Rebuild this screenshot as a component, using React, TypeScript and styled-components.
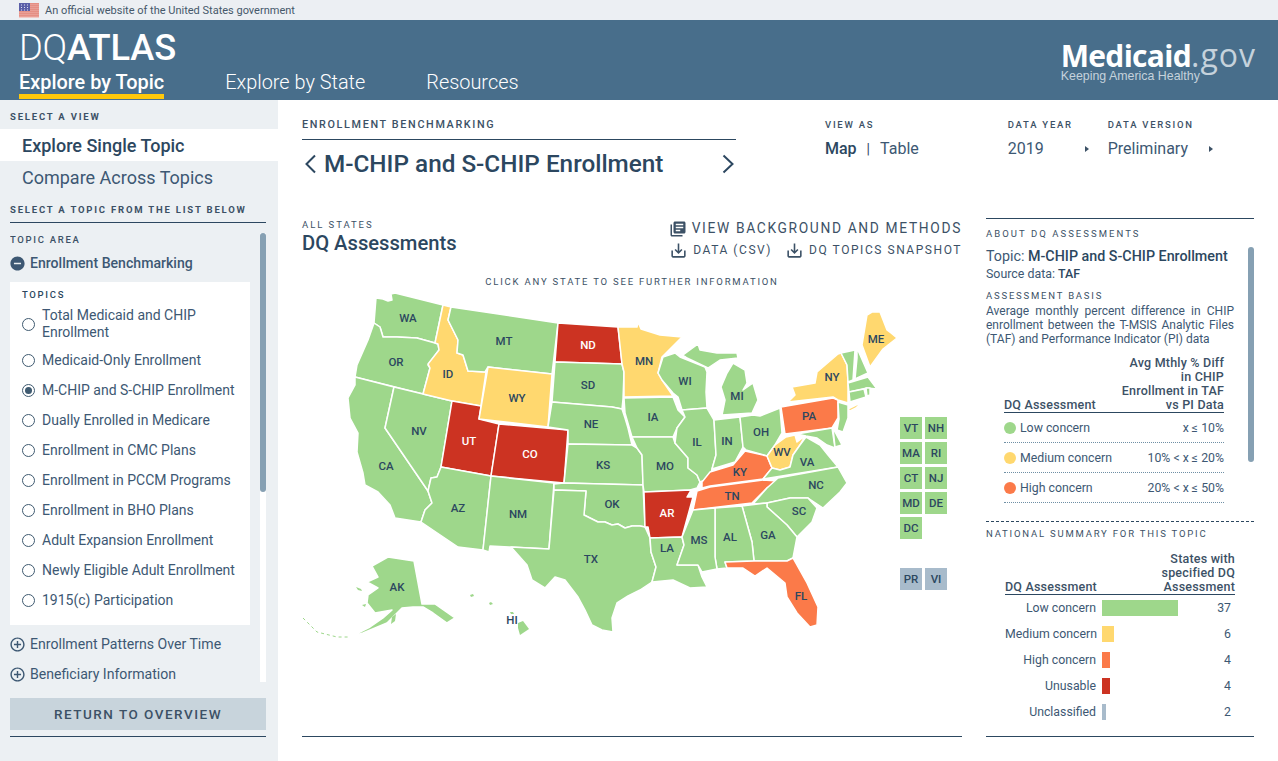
import React from "react";
import styled, { createGlobalStyle } from "styled-components";
import { MdLibraryBooks, MdSaveAlt, MdRemoveCircle, MdAddCircleOutline } from "react-icons/md";

const INK = "#2c4760";
const GREEN = "#9ed78b";
const YELLOW = "#ffd86f";
const ORANGE = "#fb7a49";
const RED = "#cc3322";
const SLATE = "#a8bbcb";

const GlobalStyle = createGlobalStyle`
  html, body {
    margin: 0;
    padding: 0;
    background: #fff;
    color: ${INK};
    font-family: Roboto, "Liberation Sans", sans-serif;
  }
  * { box-sizing: border-box; }
`;

const Page = styled.div`
  width: 1278px;
  height: 761px;
  overflow: hidden;
  display: flex;
  flex-direction: column;
`;

const Banner = styled.div`
  height: 20px;
  background: #eceff3;
  display: flex;
  align-items: center;
  gap: 6px;
  padding-left: 19px;
  font-size: 11px;
  color: #45586a;
`;

const Header = styled.header`
  height: 80px;
  background: #486e8b;
  padding: 0 22px 0 19px;
  display: flex;
  justify-content: space-between;
  color: #fff;
`;

const Brand = styled.div`
  font-size: 36.3px;
  line-height: 44px;
  font-weight: 500;
  padding-top: 6px;
  height: 50px;
  letter-spacing: -0.2px;
  span { font-weight: 300; }
`;

const Nav = styled.nav`
  display: flex;
  gap: 61px;
`;

const NavItem = styled.div<{ $active?: boolean }>`
  font-size: 19.9px;
  line-height: 24px;
  height: 29px;
  padding-top: 1px;
  font-weight: ${(p) => (p.$active ? 500 : 300)};
  border-bottom: ${(p) => (p.$active ? "5px solid #ffc80a" : "none")};
`;

const Logo = styled.div`
  padding-top: 20px;
  line-height: 1;
`;

const LogoMain = styled.div`
  font-family: "Open Sans", "Liberation Sans", sans-serif;
  font-size: 30px;
  height: 30px;
  line-height: 30px;
  font-weight: 700;
  letter-spacing: -0.7px;
  span { font-size: 32px; font-weight: 400; color: #c5d2dc; letter-spacing: 1px; }
`;

const LogoTag = styled.div`
  font-family: "Liberation Sans", sans-serif;
  font-size: 12.4px;
  color: #c5d2dc;
`;

const Body = styled.div`
  flex: 1;
  display: flex;
  min-height: 0;
`;

const Sidebar = styled.aside`
  width: 278px;
  background: #ecf0f3;
  display: flex;
  flex-direction: column;
`;

const SideLabel = styled.div`
  font-size: 9.5px;
  font-weight: 700;
  letter-spacing: 1.8px;
  line-height: 12px;
  color: #3c5166;
`;

const ViewLabel = styled(SideLabel)`
  padding: 11px 10px 6px;
`;

const ViewItem = styled.div<{ $active?: boolean }>`
  height: 32px;
  line-height: 33px;
  padding-left: 22px;
  font-size: 18px;
  font-weight: ${(p) => (p.$active ? 500 : 400)};
  background: ${(p) => (p.$active ? "#fff" : "transparent")};
  color: ${(p) => (p.$active ? INK : "#3d5873")};
`;

const ListLabel = styled(SideLabel)`
  margin: 11px 12px 0 10px;
  padding-bottom: 6px;
  border-bottom: 1px solid ${INK};
`;

const ScrollPanel = styled.div`
  display: flex;
  height: 449px;
  margin: 10px 12px 0 10px;
  gap: 10px;
  overflow: hidden;
`;

const PanelContent = styled.div`
  width: 240px;
  padding-top: 1px;
`;

const Track = styled.div`
  width: 6px;
  height: 100%;
  background: #fff;
`;

const Thumb = styled.div<{ $height: number }>`
  width: 6px;
  flex: none;
  height: ${(p) => p.$height}px;
  border-radius: 3px;
  background: #86a0b3;
`;

const AreaLabel = styled.div`
  font-size: 9.5px;
  font-weight: 500;
  letter-spacing: 1.7px;
  line-height: 12px;
  margin-bottom: 2px;
  color: #3c5166;
`;

const AreaRow = styled.div<{ $open?: boolean }>`
  display: flex;
  align-items: center;
  gap: 6px;
  height: 30px;
  font-size: 14.1px;
  font-weight: ${(p) => (p.$open ? 500 : 400)};
  color: #3d5873;
  svg { flex: none; margin: 0 -1.5px; }
`;

const TopicBox = styled.div`
  background: #fff;
  padding: 7px 12px 10px;
  margin: 4px 0;
  height: 343px;
`;

const TopicsLabel = styled.div`
  font-size: 9.5px;
  font-weight: 500;
  letter-spacing: 1.7px;
  line-height: 12px;
  margin-bottom: 6px;
`;

const TopicRow = styled.div<{ $tall?: boolean }>`
  display: flex;
  align-items: center;
  gap: 7px;
  min-height: 30px;
  font-size: 14px;
  line-height: 17px;
  color: #3d5873;
  margin-bottom: ${(p) => (p.$tall ? "4px" : "0")};
`;

const Radio = styled.span<{ $checked?: boolean }>`
  width: 13px;
  height: 13px;
  flex: none;
  border-radius: 50%;
  border: 1.5px solid #3f5a70;
  display: flex;
  align-items: center;
  justify-content: center;
  &::after {
    content: "";
    display: ${(p) => (p.$checked ? "block" : "none")};
    width: 7px;
    height: 7px;
    border-radius: 50%;
    background: #3f5a70;
  }
`;

const ReturnButton = styled.div`
  margin: 16px 12px 0 10px;
  height: 32px;
  line-height: 32px;
  background: #c8d4dc;
  text-align: center;
  font-size: 13.5px;
  font-weight: 500;
  letter-spacing: 1.5px;
  color: #3c5166;
`;

const SideRule = styled.div`
  margin: 6px 12px 0 10px;
  border-top: 1px solid ${INK};
`;

const Content = styled.main`
  flex: 1;
  padding: 0 24px;
  display: grid;
  grid-template-columns: 660px 268px;
  grid-template-rows: 118px 1fr;
  column-gap: 24px;
`;

const TopBar = styled.div`
  grid-column: 1 / span 2;
  display: flex;
  padding-top: 18px;
`;

const TitleBlock = styled.div`
  width: 434px;
`;

const Eyebrow = styled.div`
  font-size: 10.8px;
  font-weight: 500;
  letter-spacing: 1.65px;
  line-height: 12px;
  padding: 1px 0 8px;
  border-bottom: 1px solid ${INK};
  color: #3c5166;
`;

const Title = styled.h1`
  margin: 0;
  display: flex;
  align-items: center;
  gap: 8px;
  height: 47px;
  font-size: 24.3px;
  font-weight: 500;
  color: ${INK};
  > span { flex: 1; }
`;

const Control = styled.div<{ $left: number }>`
  margin-left: ${(p) => p.$left}px;
  padding-top: 1px;
`;

const ControlLabel = styled.div`
  font-size: 9.5px;
  font-weight: 500;
  letter-spacing: 1.75px;
  line-height: 12px;
  color: #3c5166;
`;

const ControlValue = styled.div`
  margin-top: 8px;
  font-size: 16px;
  line-height: 20px;
  color: #3d5873;
  display: flex;
  align-items: center;
  b { font-weight: 500; color: ${INK}; }
  i { font-style: normal; font-size: 14px; padding: 0 10px; color: ${INK}; }
`;

const Caret = styled.span<{ $gap: number }>`
  margin-left: ${(p) => p.$gap}px;
  border-left: 4px solid #3c5166;
  border-top: 3.5px solid transparent;
  border-bottom: 3.5px solid transparent;
`;

const MapColumn = styled.section`
  display: flex;
  flex-direction: column;
`;

const MapHead = styled.div`
  display: flex;
  justify-content: space-between;
  height: 58px;
  padding-top: 1px;
`;

const StateScope = styled.div`
  font-size: 9.5px;
  font-weight: 400;
  letter-spacing: 1.95px;
  line-height: 12px;
  color: #3c5166;
`;

const MapTitle = styled.h2`
  margin: 0;
  font-size: 20.2px;
  line-height: 24px;
  font-weight: 500;
  color: ${INK};
`;

const Links = styled.div`
  display: flex;
  flex-direction: column;
  align-items: flex-end;
  gap: 5px;
  padding-top: 1px;
`;

const LinkRow = styled.div`
  display: flex;
  gap: 15px;
`;

const LinkItem = styled.span<{ $big?: boolean }>`
  display: inline-flex;
  align-items: center;
  gap: ${(p) => (p.$big ? "6px" : "7px")};
  font-size: ${(p) => (p.$big ? "13.8px" : "12px")};
  line-height: 17px;
  letter-spacing: ${(p) => (p.$big ? "1.65px" : "1.55px")};
  color: #3c5166;
  svg { flex: none; margin: ${(p) => (p.$big ? "-1px" : "-2px")}; }
`;

const MapHint = styled.div`
  text-align: center;
  font-size: 9.5px;
  letter-spacing: 1.8px;
  line-height: 12px;
  color: #3c5166;
`;

const MapCanvas = styled.svg`
  display: block;
  margin-top: 2px;
`;

const StateCode = styled.text<{ $light?: boolean }>`
  font-family: Roboto, sans-serif;
  font-size: 11.5px;
  font-weight: 500;
  fill: ${(p) => (p.$light ? "#fff" : INK)};
  text-anchor: middle;
  dominant-baseline: central;
`;

const MapFoot = styled.div`
  margin-top: 86px;
  border-top: 1px solid ${INK};
`;

const InfoColumn = styled.section`
  display: flex;
  flex-direction: column;
`;

const InfoTopRule = styled.div`
  border-top: 1px solid ${INK};
`;

const InfoLabel = styled.div<{ $tight?: boolean }>`
  font-size: 9.5px;
  font-weight: 400;
  letter-spacing: ${(p) => (p.$tight ? "1.8px" : "2.05px")};
  line-height: 12px;
  color: #3c5166;
`;

const AboutLabel = styled(InfoLabel)`
  margin-top: 9px;
`;

const AboutScroll = styled.div`
  display: flex;
  justify-content: space-between;
  margin-top: 7px;
  height: 274px;
`;

const AboutBody = styled.div`
  width: 248px;
`;

const TopicLine = styled.div`
  font-size: 14.3px;
  line-height: 19px;
  color: #3d5873;
  b { font-weight: 500; color: ${INK}; }
`;

const SourceLine = styled.div`
  font-size: 12.4px;
  line-height: 16px;
  color: #3d5873;
  b { font-weight: 500; color: ${INK}; }
`;

const BasisLabel = styled(InfoLabel)`
  margin-top: 8px;
`;

const BasisText = styled.p`
  margin: 2px 0 0;
  font-size: 12px;
  line-height: 14px;
  text-align: justify;
  color: #3d5873;
`;

const Legend = styled.div`
  margin: 10px 10px 0 18px;
`;

const LegendHead = styled.div`
  display: flex;
  justify-content: space-between;
  align-items: flex-end;
  font-size: 12.5px;
  font-weight: 500;
  line-height: 14px;
  letter-spacing: 0.2px;
  border-bottom: 1px solid ${INK};
  color: #3c5166;
`;

const HeadRight = styled.div`
  text-align: right;
`;

const LegendRow = styled.div`
  display: flex;
  align-items: center;
  height: 30px;
  font-size: 12.3px;
  color: #3d5873;
  border-bottom: 1px dotted #6f8fa5;
  span:last-child { margin-left: auto; }
`;

const Dot = styled.span<{ $color: string }>`
  width: 12px;
  height: 12px;
  border-radius: 50%;
  margin-right: 4px;
  background: ${(p) => p.$color};
`;

const DashedRule = styled.div`
  border-top: 1px dashed ${INK};
`;

const SummaryLabel = styled(InfoLabel)`
  margin-top: 6px;
`;

const SummaryTable = styled.div`
  margin: 12px 19px 0 19px;
`;

const SummaryRow = styled.div`
  display: grid;
  grid-template-columns: 91px 1fr 20px;
  column-gap: 6px;
  align-items: center;
  height: 26px;
  font-size: 12.3px;
  color: #3d5873;
  > span:first-child { text-align: right; white-space: nowrap; }
  > span:last-child { text-align: right; margin-right: 4px; }
`;

const Bar = styled.div<{ $color: string }>`
  height: 16px;
  background: ${(p) => p.$color};
`;

const SummaryFoot = styled.div`
  margin-top: 11px;
  border-top: 1px solid ${INK};
`;

type StateShape = { code: string; fill: string; pts: string; lx?: number; ly?: number; light?: boolean; bare?: boolean };

const STATES: StateShape[] = [
  { code: "WA", fill: GREEN, lx: 408, ly: 318, pts: "376,298 383,299 388,301 392,300 391,294 395,293 443,305 435,343 417,338 397,337 383,337 380,327 374,323" },
  { code: "OR", fill: GREEN, lx: 396, ly: 362, pts: "374,323 380,327 383,337 397,337 417,338 435,343 438,344 439,350 428,365 430,368 423,394 355,377 357,365 368,340" },
  { code: "CA", fill: GREEN, lx: 386, ly: 466, pts: "355,377 394,387 385,428 428,491 432,503 425,510 421,522 395,518 390,505 378,492 365,485 363,473 357,452 358,433 350,418 348,398 355,385" },
  { code: "NV", fill: GREEN, lx: 419, ly: 431, pts: "394,387 423,394 452,401 441,467 437,477 431,478 428,491 385,428" },
  { code: "ID", fill: YELLOW, lx: 448, ly: 374, pts: "443,305 451,307 448,320 458,340 457,353 463,355 468,371 486,372 481,406 452,401 423,394 430,368 428,364 439,350 438,344 435,343" },
  { code: "MT", fill: GREEN, lx: 504, ly: 341, pts: "451,307 558,323 552,374 488,367 485,372 468,371 463,355 457,353 458,340 448,320" },
  { code: "UT", fill: RED, lx: 469, ly: 441, light: true, pts: "452,401 481,406 479,419 499,424 491,476 441,467" },
  { code: "WY", fill: YELLOW, lx: 517, ly: 398, pts: "488,367 552,374 548,427 479,419" },
  { code: "CO", fill: RED, lx: 530, ly: 454, light: true, pts: "499,424 568,430 564,483 491,476" },
  { code: "AZ", fill: GREEN, lx: 458, ly: 508, pts: "431,478 437,477 441,467 491,476 483,550 458,547 421,522 425,510 432,503 428,491" },
  { code: "NM", fill: GREEN, lx: 518, ly: 514, pts: "491,476 554,483 549,549 509,547 490,546 489,552 483,550" },
  { code: "ND", fill: RED, lx: 588, ly: 345, light: true, pts: "558,323 618,327 622,364 555,362" },
  { code: "SD", fill: GREEN, lx: 588, ly: 385, pts: "555,362 622,364 624,372 623,399 622,409 612,407 552,402" },
  { code: "NE", fill: GREEN, lx: 591, ly: 424, pts: "552,402 612,407 622,409 625,418 628,428 632,445 568,444 568,430 548,427" },
  { code: "KS", fill: GREEN, lx: 603, ly: 465, pts: "568,444 632,445 637,448 642,455 643,485 564,483" },
  { code: "OK", fill: GREEN, lx: 612, ly: 504, pts: "554,484 564,483 643,485 645,527 640,526 632,526 625,528 618,524 612,525 605,522 598,522 590,518 584,515 586,491 554,490" },
  { code: "TX", fill: GREEN, lx: 591, ly: 559, pts: "554,490 586,491 584,515 590,518 598,522 605,522 612,525 618,524 625,528 632,526 640,526 645,527 650,538 651,552 656,567 652,582 640,590 628,596 617,603 612,618 613,632 602,630 592,625 585,610 578,597 565,580 555,577 545,588 532,580 527,565 511,547 549,549" },
  { code: "MN", fill: YELLOW, lx: 644, ly: 361, pts: "618,327 637,327 638,322 641,329 660,335 682,337 662,357 658,373 662,380 673,396 624,397 624,372 622,364" },
  { code: "IA", fill: GREEN, lx: 653, ly: 417, pts: "624,398 673,397 678,410 685,417 677,428 673,437 632,437 625,413" },
  { code: "MO", fill: GREEN, lx: 665, ly: 466, pts: "632,437 673,437 675,443 688,458 688,468 697,475 700,482 697,488 690,490 644,492 643,485 642,455 637,448" },
  { code: "AR", fill: RED, lx: 667, ly: 513, light: true, pts: "644,492 691,490 687,497 693,497 682,537 650,538 648,527 645,527" },
  { code: "LA", fill: GREEN, lx: 667, ly: 548, pts: "650,538 682,537 684,545 677,565 698,565 702,577 707,587 690,588 673,580 652,582 656,567 651,552" },
  { code: "WI", fill: GREEN, lx: 685, ly: 381, pts: "663,357 675,353 680,357 705,367 707,372 706,392 707,408 682,410 678,397 673,393 662,380 658,373" },
  { code: "MIU", fill: GREEN, pts: "683,355 698,344 700,350 717,353 737,353 738,358 720,360 708,368 687,358" },
  { code: "MI", fill: GREEN, lx: 737, ly: 396, pts: "733,363 745,370 747,383 743,390 753,383 758,400 752,413 722,415 725,400 721,387 727,373" },
  { code: "IL", fill: GREEN, lx: 697, ly: 442, pts: "682,410 707,408 714,420 716,455 712,469 710,478 700,482 697,475 688,468 688,458 675,443 677,428 685,417" },
  { code: "IN", fill: GREEN, lx: 727, ly: 441, pts: "714,420 740,417 743,447 735,462 712,469 716,455" },
  { code: "OH", fill: GREEN, lx: 761, ly: 432, pts: "740,417 753,415 760,416 780,408 782,433 775,445 767,456 746,450 743,447" },
  { code: "KY", fill: ORANGE, lx: 740, ly: 472, pts: "702,482 710,472 733,465 745,451 767,456 772,468 763,479 710,486 702,488" },
  { code: "TN", fill: ORANGE, lx: 732, ly: 496, pts: "697,491 710,487 763,480 778,481 767,488 752,503 693,510" },
  { code: "WV", fill: YELLOW, lx: 782, ly: 452, pts: "786,437 795,435 797,442 805,436 800,445 793,455 790,467 780,470 772,468 767,456 775,445" },
  { code: "PA", fill: ORANGE, lx: 809, ly: 416, pts: "781,407 833,398 838,400 838,418 832,428 785,434" },
  { code: "NY", fill: YELLOW, lx: 832, ly: 377, pts: "788,402 795,395 792,387 815,383 817,372 838,354 841,353 847,365 848,382 848,403 838,400 833,397" },
  { code: "LI", fill: YELLOW, pts: "848,409 862,402 856,408 850,411" },
  { code: "NJ", fill: GREEN, pts: "838,402 848,405 848,418 843,432 837,430 839,419" },
  { code: "VA", fill: GREEN, lx: 807, ly: 462, pts: "763,479 772,468 780,470 790,467 793,455 800,445 806,437 820,445 828,455 838,467" },
  { code: "MD", fill: GREEN, pts: "797,434 832,428 835,448 827,445 817,438 806,436" },
  { code: "DE", fill: GREEN, pts: "833,428 842,445 835,447" },
  { code: "NC", fill: GREEN, lx: 816, ly: 485, pts: "778,478 838,467 847,483 840,492 823,508 808,498 790,498 767,503 753,504 767,488" },
  { code: "SC", fill: GREEN, lx: 799, ly: 511, pts: "767,503 790,498 808,498 817,508 812,522 797,537 787,525 767,507" },
  { code: "GA", fill: GREEN, lx: 768, ly: 535, pts: "742,506 767,503 767,507 787,525 797,537 793,558 787,561 754,561 752,542" },
  { code: "AL", fill: GREEN, lx: 730, ly: 537, pts: "715,508 742,506 752,542 754,561 725,562 727,568 717,569 715,557" },
  { code: "MS", fill: GREEN, lx: 699, ly: 540, pts: "682,537 693,510 715,508 715,557 717,569 702,572 698,565 677,565 684,545" },
  { code: "FL", fill: ORANGE, lx: 801, ly: 596, pts: "725,562 754,561 787,561 793,558 807,583 818,607 817,625 810,627 797,613 787,597 785,583 767,568 755,576 743,568 727,568" },
  { code: "ME", fill: YELLOW, lx: 876, ly: 339, pts: "867,315 872,312 880,312 887,330 891,333 897,338 883,349 870,367 862,345" },
  { code: "VT", fill: GREEN, pts: "841,353 855,350 853,380 848,382 847,365" },
  { code: "NH", fill: GREEN, pts: "857,348 868,373 855,379 857,358" },
  { code: "MA", fill: GREEN, pts: "848,383 868,377 877,389 867,388 849,392" },
  { code: "CT", fill: GREEN, pts: "849,392 864,389 866,397 850,402" },
  { code: "RI", fill: GREEN, pts: "866,388 870,388 870,395 867,396" },
  { code: "AK", fill: GREEN, lx: 397, ly: 587, pts: "372,566 388,557 414,561 422,604 435,604 455,618 447,623 433,613 423,607 413,607 402,608 395,615 387,623 363,633 350,637 370,627 383,618 392,610 375,613 367,603 368,595 378,588 367,582 378,577" },
  { code: "AK2", fill: GREEN, bare: true, pts: "356,587 361,589 362,591 358,590" },
  { code: "AK3", fill: GREEN, bare: true, pts: "362,605 366,604 365,607" },
  { code: "AK4", fill: GREEN, bare: true, pts: "392,617 396,614 395,621 391,624" },
  { code: "HI", fill: GREEN, bare: true, pts: "518,623 523,621 529,629 520,635 518,628" },
  { code: "HI2", fill: GREEN, bare: true, pts: "470,595 473,594 474,596 471,597" },
  { code: "HI3", fill: GREEN, bare: true, pts: "489,603 491,602 493,604 490,605" },
  { code: "HI4", fill: GREEN, bare: true, pts: "510,612 513,612 514,614 511,614" },
];

const LABEL_ONLY = [{ code: "HI", x: 512, y: 620 }];

const SQUARES = [
  { code: "VT", x: 900, y: 417, fill: GREEN },
  { code: "NH", x: 925, y: 417, fill: GREEN },
  { code: "MA", x: 900, y: 442, fill: GREEN },
  { code: "RI", x: 925, y: 442, fill: GREEN },
  { code: "CT", x: 900, y: 467, fill: GREEN },
  { code: "NJ", x: 925, y: 467, fill: GREEN },
  { code: "MD", x: 900, y: 492, fill: GREEN },
  { code: "DE", x: 925, y: 492, fill: GREEN },
  { code: "DC", x: 900, y: 517, fill: GREEN },
  { code: "PR", x: 900, y: 568, fill: SLATE },
  { code: "VI", x: 925, y: 568, fill: SLATE },
];

const TOPICS = [
  "Total Medicaid and CHIP Enrollment",
  "Medicaid-Only Enrollment",
  "M-CHIP and S-CHIP Enrollment",
  "Dually Enrolled in Medicare",
  "Enrollment in CMC Plans",
  "Enrollment in PCCM Programs",
  "Enrollment in BHO Plans",
  "Adult Expansion Enrollment",
  "Newly Eligible Adult Enrollment",
  "1915(c) Participation",
];

const SUMMARY = [
  { label: "Low concern", n: 37, color: GREEN },
  { label: "Medium concern", n: 6, color: YELLOW },
  { label: "High concern", n: 4, color: ORANGE },
  { label: "Unusable", n: 4, color: RED },
  { label: "Unclassified", n: 2, color: SLATE },
];

const Flag = () => (
  <svg width="20" height="15" viewBox="0 0 20 15">
    <rect width="20" height="15" fill="#f2c9c4" />
    {[0, 2, 4, 6, 8, 10, 12].map((y) => (
      <rect key={y} y={y + 0.3} width="20" height="1.2" fill="#e0776a" />
    ))}
    <rect width="11" height="8" fill="#5b5fa8" />
    {[1.5, 4, 6.5].map((y) => [2, 5, 8].map((x) => <rect key={`${x}-${y}`} x={x} y={y} width="1" height="1" fill="#dfe0f0" />))}
  </svg>
);

const Chevron = ({ flip }: { flip?: boolean }) => (
  <svg width="14" height="22" viewBox="0 0 14 22" fill="none" stroke={INK} strokeWidth="2">
    <path d={flip ? "M1.5 2.5 L10.5 11 L1.5 19.5" : "M13 2.5 L4.5 11 L13 19.5"} />
  </svg>
);

const UsMap = () => (
  <MapCanvas width="660" height="360" viewBox="302 290 660 360">
    <polyline points="303,618 317,632 337,637 350,637" fill="none" stroke={GREEN} strokeWidth="1" strokeDasharray="3 3" />
    {STATES.map((s) => (
      <polygon
        key={s.code}
        points={s.pts}
        fill={s.fill}
        stroke={s.bare ? "none" : "#fff"}
        strokeWidth="1.5"
        strokeLinejoin="round"
      />
    ))}
    {STATES.filter((s) => s.lx).map((s) => (
      <StateCode key={s.code} x={s.lx} y={s.ly} $light={s.light}>
        {s.code}
      </StateCode>
    ))}
    {LABEL_ONLY.map((s) => (
      <StateCode key={s.code} x={s.x} y={s.y}>
        {s.code}
      </StateCode>
    ))}
    {SQUARES.map((s) => (
      <g key={s.code}>
        <rect x={s.x} y={s.y} width="22" height="22" fill={s.fill} />
        <StateCode x={s.x + 11} y={s.y + 11}>
          {s.code}
        </StateCode>
      </g>
    ))}
  </MapCanvas>
);

export default function App() {
  return (
    <Page>
      <GlobalStyle />
      <Banner>
        <Flag />
        An official website of the United States government
      </Banner>
      <Header>
        <div>
          <Brand>
            <span>DQ</span>ATLAS
          </Brand>
          <Nav>
            <NavItem $active>Explore by Topic</NavItem>
            <NavItem>Explore by State</NavItem>
            <NavItem>Resources</NavItem>
          </Nav>
        </div>
        <Logo>
          <LogoMain>
            Medicaid<span>.gov</span>
          </LogoMain>
          <LogoTag>Keeping America Healthy</LogoTag>
        </Logo>
      </Header>
      <Body>
        <Sidebar>
          <ViewLabel>SELECT A VIEW</ViewLabel>
          <ViewItem $active>Explore Single Topic</ViewItem>
          <ViewItem>Compare Across Topics</ViewItem>
          <ListLabel>SELECT A TOPIC FROM THE LIST BELOW</ListLabel>
          <ScrollPanel>
            <PanelContent>
              <AreaLabel>TOPIC AREA</AreaLabel>
              <AreaRow $open>
                <MdRemoveCircle size={17} />
                Enrollment Benchmarking
              </AreaRow>
              <TopicBox>
                <TopicsLabel>TOPICS</TopicsLabel>
                {TOPICS.map((t, i) => (
                  <TopicRow key={t} $tall={i === 0}>
                    <Radio $checked={i === 2} />
                    {t}
                  </TopicRow>
                ))}
              </TopicBox>
              <AreaRow>
                <MdAddCircleOutline size={17} />
                Enrollment Patterns Over Time
              </AreaRow>
              <AreaRow>
                <MdAddCircleOutline size={17} />
                Beneficiary Information
              </AreaRow>
            </PanelContent>
            <Track>
              <Thumb $height={259} />
            </Track>
          </ScrollPanel>
          <ReturnButton>RETURN TO OVERVIEW</ReturnButton>
          <SideRule />
        </Sidebar>
        <Content>
          <TopBar>
            <TitleBlock>
              <Eyebrow>ENROLLMENT BENCHMARKING</Eyebrow>
              <Title>
                <Chevron />
                <span>M-CHIP and S-CHIP Enrollment</span>
                <Chevron flip />
              </Title>
            </TitleBlock>
            <Control $left={89}>
              <ControlLabel>VIEW AS</ControlLabel>
              <ControlValue>
                <b>Map</b>
                <i>|</i>
                Table
              </ControlValue>
            </Control>
            <Control $left={89}>
              <ControlLabel>DATA YEAR</ControlLabel>
              <ControlValue>
                2019
                <Caret $gap={41} />
              </ControlValue>
            </Control>
            <Control $left={19}>
              <ControlLabel>DATA VERSION</ControlLabel>
              <ControlValue>
                Preliminary
                <Caret $gap={21} />
              </ControlValue>
            </Control>
          </TopBar>
          <MapColumn>
            <MapHead>
              <div>
                <StateScope>ALL STATES</StateScope>
                <MapTitle>DQ Assessments</MapTitle>
              </div>
              <Links>
                <LinkItem $big>
                  <MdLibraryBooks size={18} />
                  VIEW BACKGROUND AND METHODS
                </LinkItem>
                <LinkRow>
                  <LinkItem>
                    <MdSaveAlt size={19} />
                    DATA (CSV)
                  </LinkItem>
                  <LinkItem>
                    <MdSaveAlt size={19} />
                    DQ TOPICS SNAPSHOT
                  </LinkItem>
                </LinkRow>
              </Links>
            </MapHead>
            <MapHint>CLICK ANY STATE TO SEE FURTHER INFORMATION</MapHint>
            <UsMap />
            <MapFoot />
          </MapColumn>
          <InfoColumn>
            <InfoTopRule />
            <AboutLabel>ABOUT DQ ASSESSMENTS</AboutLabel>
            <AboutScroll>
              <AboutBody>
                <TopicLine>
                  Topic: <b>M-CHIP and S-CHIP Enrollment</b>
                </TopicLine>
                <SourceLine>
                  Source data: <b>TAF</b>
                </SourceLine>
                <BasisLabel $tight>ASSESSMENT BASIS</BasisLabel>
                <BasisText>
                  Average monthly percent difference in CHIP enrollment between the T-MSIS Analytic Files (TAF) and
                  Performance Indicator (PI) data
                </BasisText>
                <Legend>
                  <LegendHead>
                    <span>DQ Assessment</span>
                    <HeadRight>
                      Avg Mthly % Diff
                      <br />
                      in CHIP
                      <br />
                      Enrollment in TAF
                      <br />
                      vs PI Data
                    </HeadRight>
                  </LegendHead>
                  <LegendRow>
                    <Dot $color={GREEN} />
                    <span>Low concern</span>
                    <span>x ≤ 10%</span>
                  </LegendRow>
                  <LegendRow>
                    <Dot $color={YELLOW} />
                    <span>Medium concern</span>
                    <span>10% &lt; x ≤ 20%</span>
                  </LegendRow>
                  <LegendRow>
                    <Dot $color={ORANGE} />
                    <span>High concern</span>
                    <span>20% &lt; x ≤ 50%</span>
                  </LegendRow>
                </Legend>
              </AboutBody>
              <Thumb $height={215} />
            </AboutScroll>
            <DashedRule />
            <SummaryLabel $tight>NATIONAL SUMMARY FOR THIS TOPIC</SummaryLabel>
            <SummaryTable>
              <LegendHead>
                <span>DQ Assessment</span>
                <HeadRight>
                  States with
                  <br />
                  specified DQ
                  <br />
                  Assessment
                </HeadRight>
              </LegendHead>
              {SUMMARY.map((r) => (
                <SummaryRow key={r.label}>
                  <span>{r.label}</span>
                  <div>
                    <Bar $color={r.color} style={{ width: r.n * 2.05 }} />
                  </div>
                  <span>{r.n}</span>
                </SummaryRow>
              ))}
            </SummaryTable>
            <SummaryFoot />
          </InfoColumn>
        </Content>
      </Body>
    </Page>
  );
}
